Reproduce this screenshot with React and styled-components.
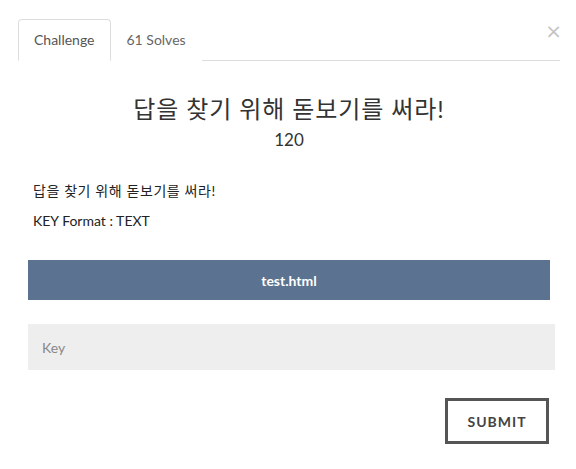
import React from "react";
import styled, { createGlobalStyle } from "styled-components";

const Global = createGlobalStyle`
  html, body { margin: 0; padding: 0; background: #fff; }
  body { font-family: Lato, "Noto Sans CJK KR", sans-serif; color: #333; }
  * { box-sizing: border-box; }
`;

const Modal = styled.div`
  position: relative;
  width: 576px;
  height: 469px;
  padding: 19px 16px 0 18px;
`;

const Close = styled.button`
  position: absolute;
  top: 19px;
  right: 14px;
  border: 0;
  background: none;
  padding: 0;
  font-family: "DejaVu Sans", sans-serif;
  font-size: 20px;
  line-height: 24px;
  color: #c4c4c4;
  cursor: pointer;
`;

const TabBar = styled.nav`
  display: flex;
  border-bottom: 1px solid #ddd;
  width: 542px;
`;

const Tab = styled.div`
  padding: 10px 15px;
  line-height: 20px;
  font-size: 14px;
  margin-bottom: -1px;
  border: 1px solid ${(p) => (p.$active ? "#ddd" : "transparent")};
  border-bottom-color: ${(p) => (p.$active ? "#fff" : "transparent")};
  border-radius: 4px 4px 0 0;
  background: #fff;
  color: ${(p) => (p.$active ? "#555" : "#666")};
`;

const Body = styled.div`
  display: flex;
  flex-direction: column;
  width: 542px;
`;

const Title = styled.h3`
  margin: 34px 0 0;
  text-align: center;
  font-size: 24px;
  line-height: 28px;
  font-weight: 400;
  letter-spacing: 0.9px;
  color: #333;
`;

const Points = styled.h4`
  margin: 7px 0 0;
  text-align: center;
  font-size: 17px;
  line-height: 20px;
  font-weight: 400;
  color: #333;
`;

const Description = styled.div`
  margin: 31px 0 0;
  padding-left: 15px;
  font-size: 14px;
  line-height: 20px;
  color: #222;
`;

const Para = styled.p`
  margin: 0 0 10px;
  letter-spacing: ${(p) => (p.$wide ? "0.6px" : "normal")};
`;

const FileBar = styled.a`
  display: flex;
  align-items: center;
  justify-content: center;
  margin: 19px 0 0 10px;
  width: 522px;
  height: 40px;
  background: #5b7290;
  color: #fff;
  font-weight: 700;
  font-size: 14px;
  text-decoration: none;
`;

const KeyInput = styled.input`
  margin: 24px 0 0 10px;
  width: 527px;
  height: 46px;
  border: 0;
  background: #eee;
  padding: 0 14px;
  font-family: Lato, sans-serif;
  font-size: 14px;
  color: #333;
  outline: none;
  &::placeholder { color: #888; }
`;

const Actions = styled.div`
  display: flex;
  justify-content: flex-end;
  margin-top: 28px;
  padding-right: 11px;
`;

const Submit = styled.button`
  width: 104px;
  height: 46px;
  border: 3px solid #555;
  background: #fff;
  color: #444;
  font-family: Lato, sans-serif;
  font-weight: 700;
  font-size: 14px;
  letter-spacing: 1px;
  cursor: pointer;
`;

export default function App() {
  return (
    <>
      <Global />
      <Modal>
        <Close aria-label="Close">×</Close>
        <TabBar>
          <Tab $active>Challenge</Tab>
          <Tab>61 Solves</Tab>
        </TabBar>
        <Body>
          <Title>답을 찾기 위해 돋보기를 써라!</Title>
          <Points>120</Points>
          <Description>
            <Para $wide>답을 찾기 위해 돋보기를 써라!</Para>
            <Para>KEY Format : TEXT</Para>
          </Description>
          <FileBar href="#">test.html</FileBar>
          <KeyInput placeholder="Key" />
          <Actions>
            <Submit>SUBMIT</Submit>
          </Actions>
        </Body>
      </Modal>
    </>
  );
}
